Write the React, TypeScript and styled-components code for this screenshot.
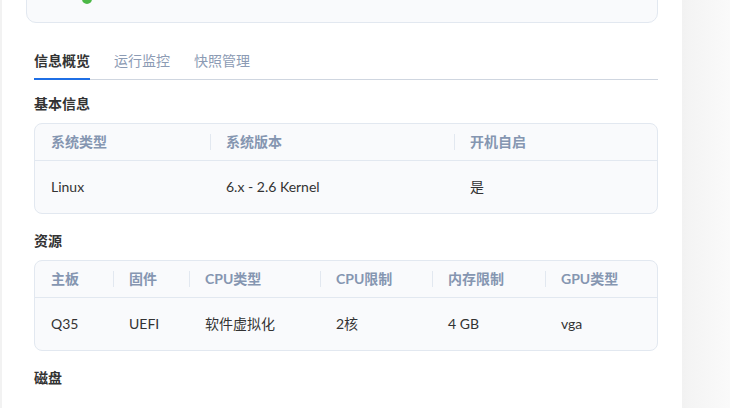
import React from 'react';
import styled, { createGlobalStyle } from 'styled-components';

const GlobalStyle = createGlobalStyle`
  html, body {
    margin: 0;
    height: 408px;
    overflow: hidden;
  }
  body {
    font-family: Lato, "Noto Sans CJK SC", sans-serif;
    color: #333333;
    background: linear-gradient(90deg, #f2f2f2 0%, #f2f2f2 683px, #f4f4f4 690px, #fafafa 730px);
  }
`;

type Table = {
  title: string;
  cols: string;
  headers: string[];
  values: string[];
};

const tables: Table[] = [
  {
    title: '基本信息',
    cols: '175px 244px 1fr',
    headers: ['系统类型', '系统版本', '开机自启'],
    values: ['Linux', '6.x - 2.6 Kernel', '是'],
  },
  {
    title: '资源',
    cols: '78px 76px 131px 112px 113px 1fr',
    headers: ['主板', '固件', 'CPU类型', 'CPU限制', '内存限制', 'GPU类型'],
    values: ['Q35', 'UEFI', '软件虚拟化', '2核', '4 GB', 'vga'],
  },
];

const tabs = ['信息概览', '运行监控', '快照管理'];

const App = () => {
  return (
    <>
      <GlobalStyle />
      <Panel>
        <StatusCard>
          <StatusDot />
        </StatusCard>
        <Content>
          <TabBar>
            {tabs.map((t, i) => (
              <Tab key={t} active={i === 0}>
                {t}
              </Tab>
            ))}
          </TabBar>
          {tables.map((tb) => (
            <Section key={tb.title}>
              <SectionTitle>{tb.title}</SectionTitle>
              <InfoTable>
                <HeadRow cols={tb.cols}>
                  {tb.headers.map((h, i) => (
                    <HeadCell key={h} first={i === 0}>
                      {h}
                    </HeadCell>
                  ))}
                </HeadRow>
                <DataRow cols={tb.cols}>
                  {tb.values.map((v, i) => (
                    <DataCell key={i}>{v}</DataCell>
                  ))}
                </DataRow>
              </InfoTable>
            </Section>
          ))}
          <Section>
            <SectionTitle>磁盘</SectionTitle>
          </Section>
        </Content>
      </Panel>
    </>
  );
};

export default App;

const Panel = styled.div`
  display: flow-root;
  width: 632px;
  height: 408px;
  margin-left: 2px;
  padding: 0 24px;
  background: #ffffff;
  box-sizing: content-box;
`;

const StatusCard = styled.div`
  position: relative;
  height: 60px;
  margin-top: -39px;
  background: #f9fafc;
  border: 1px solid #e2e8f0;
  border-radius: 10px;
`;

const StatusDot = styled.span`
  position: absolute;
  left: 55px;
  bottom: 18px;
  width: 10px;
  height: 10px;
  border-radius: 50%;
  background: #4cb847;
`;

const Content = styled.div`
  margin-left: 8px;
  padding-top: 28px;
`;

const TabBar = styled.div`
  display: flex;
  gap: 24px;
  border-bottom: 1px solid #cfd6e0;
`;

const Tab = styled.div<{ active?: boolean }>`
  font-size: 14px;
  line-height: 20px;
  padding-bottom: 7px;
  margin-bottom: -1px;
  font-weight: ${(p) => (p.active ? 600 : 400)};
  color: ${(p) => (p.active ? '#333333' : '#8c9bb4')};
  border-bottom: 2px solid ${(p) => (p.active ? '#1f6fe5' : 'transparent')};
`;

const Section = styled.div`
  margin-top: 14px;
  & + & {
    margin-top: 17px;
  }
`;

const SectionTitle = styled.div`
  font-size: 14px;
  line-height: 20px;
  font-weight: 700;
  color: #333333;
  margin-bottom: 9px;
`;

const InfoTable = styled.div`
  background: #f9fafc;
  border: 1px solid #e2e8f0;
  border-radius: 8px;
  overflow: hidden;
`;

const HeadRow = styled.div<{ cols: string }>`
  display: grid;
  grid-template-columns: ${(p) => p.cols};
  height: 36px;
  align-items: center;
  border-bottom: 1px solid #e2e8f0;
`;

const HeadCell = styled.div<{ first?: boolean }>`
  position: relative;
  padding-left: 16px;
  font-size: 14px;
  font-weight: 700;
  color: #8596b1;
  line-height: 20px;
  &::before {
    content: '';
    display: ${(p) => (p.first ? 'none' : 'block')};
    position: absolute;
    left: 0;
    top: 2px;
    width: 1px;
    height: 16px;
    background: #e2e8f0;
  }
`;

const DataRow = styled.div<{ cols: string }>`
  display: grid;
  grid-template-columns: ${(p) => p.cols};
  height: 52px;
  align-items: center;
`;

const DataCell = styled.div`
  padding-left: 16px;
  font-size: 14px;
  line-height: 20px;
  color: #333333;
`;
